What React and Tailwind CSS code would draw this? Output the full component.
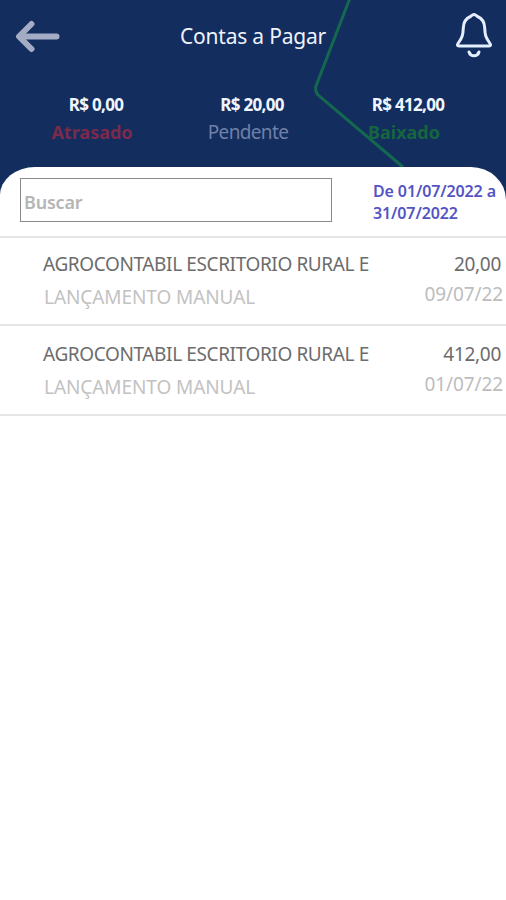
import React from 'react';

const totals = [
  { amount: 'R$ 0,00', label: 'Atrasado', labelStyle: 'text-[#7c2a4b] font-bold text-[18px]' },
  { amount: 'R$ 20,00', label: 'Pendente', labelStyle: 'text-[#6f80a8] text-[19px] tracking-[-0.65px]' },
  { amount: 'R$ 412,00', label: 'Baixado', labelStyle: 'text-[#15663f] font-bold text-[18px]' },
];

const entries = [
  { name: 'AGROCONTABIL ESCRITORIO RURAL E', type: 'LANÇAMENTO MANUAL', value: '20,00', date: '09/07/22', box: 'h-[88px] pt-[11px]' },
  { name: 'AGROCONTABIL ESCRITORIO RURAL E', type: 'LANÇAMENTO MANUAL', value: '412,00', date: '01/07/22', box: 'h-[90px] pt-[13px]' },
];

function BackArrow() {
  return (
    <svg width="46" height="34" viewBox="0 0 46 34" fill="none" stroke="#a4abc4" strokeWidth="6" strokeLinecap="round" strokeLinejoin="round">
      <path d="M17.5 4 L5 16.5 L17.5 29" />
      <path d="M6 16.5 H42.500" />
    </svg>
  );
}

function Bell() {
  return (
    <svg width="40" height="48" viewBox="0 0 40 48" fill="none" stroke="#e6efff" strokeWidth="3" strokeLinecap="round" strokeLinejoin="round">
      <path d="M20 3.5 C18 3.5 17.5 5 16.5 5.500 C11.500 7.500 9.500 11.500 9.300 17 C9 24.500 8.300 26.500 4 32.500 C3 34 3.200 35 5 35 H35 C36.800 35 37 34 36 32.500 C31.700 26.500 31 24.500 30.700 17 C30.500 11.500 28.500 7.500 23.500 5.500 C22.500 5 22 3.500 20 3.500 Z" />
      <path d="M15 41 C16.500 46 23.500 46 25 41" />
    </svg>
  );
}

export default function App() {
  return (
    <div className="w-[506px] h-[900px] bg-white overflow-hidden font-['Noto_Sans',sans-serif]">
      <header className="relative h-[200px] bg-[#132d5e] overflow-hidden">
        {/* Green line behind the header */}
        <svg className="absolute inset-0" width="506" height="200" fill="none" stroke="#13684f" strokeWidth="3">
          <path d="M350 -2 L316 86 Q314.500 91 318 95 L403 167" />
        </svg>
        <div className="relative flex items-center justify-between h-[73px] pl-[14px] pr-[12px]">
          <BackArrow />
          <h1 className="text-[21px] leading-7 text-[#eef2fb] tracking-[-0.2px] mr-[8px] mt-[-2px]">Contas a Pagar</h1>
          <div className="mt-[-4px]">
            <Bell />
          </div>
        </div>
        <div className="relative grid grid-cols-3 w-[468px] ml-[14px] mt-[18px]">
          {totals.map((t) => (
            <div key={t.label} className="flex flex-col items-center whitespace-nowrap">
              <span className="pl-2 text-[17px] leading-[27px] font-bold text-[#f0f6ff] tracking-[-0.7px]">{t.amount}</span>
              <span className={`mt-px leading-[27px] ${t.labelStyle}`}>{t.label}</span>
            </div>
          ))}
        </div>
      </header>

      <main className="relative mt-[-33px] bg-white rounded-tl-[35px_28px] rounded-tr-[35px_33px]">
        <div className="flex h-[71px] pt-[11px] pl-5 border-b-2 border-[#e5e5e5]">
          <input
            className="w-[312px] h-[44px] border border-[#8a8a8a] pl-[3px] pt-1 bg-white text-[18px] font-semibold tracking-[-0.2px] placeholder:text-[#b5b5b5] outline-none"
            placeholder="Buscar"
          />
          <p className="ml-[41px] mt-[2px] text-[16px] leading-[22px] font-semibold tracking-[-0.12px] text-[#5454c4] whitespace-nowrap">
            De 01/07/2022 a<br />31/07/2022
          </p>
        </div>
        {entries.map((e) => (
          <div key={e.date} className={`flex justify-between pl-[43px] pr-[3px] border-b-2 border-[#e5e5e5] whitespace-nowrap ${e.box}`}>
            <div>
              <p className="text-[19px] leading-[30px] tracking-[-0.38px] text-[#6c6c6c]">{e.name}</p>
              <p className="mt-[3px] pl-[1px] text-[19px] leading-[30px] tracking-[-0.08px] text-[#c2c2c2]">{e.type}</p>
            </div>
            <div className="text-right">
              <p className="pr-[2px] text-[19px] leading-[30px] tracking-[-0.3px] text-[#6c6c6c]">{e.value}</p>
              <p className="text-[19px] leading-[30px] tracking-[-0.1px] text-[#bdbdbd]">{e.date}</p>
            </div>
          </div>
        ))}
      </main>
    </div>
  );
}
